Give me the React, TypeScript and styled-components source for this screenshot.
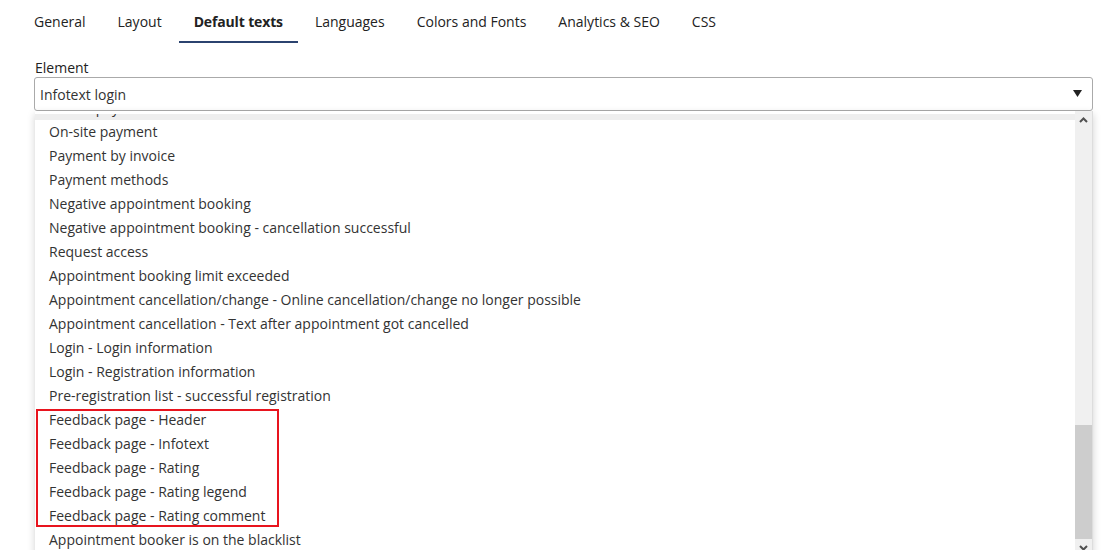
import React, { useLayoutEffect, useRef } from 'react'
import styled, { createGlobalStyle } from 'styled-components'

const GlobalStyle = createGlobalStyle`
  html, body {
    margin: 0;
    padding: 0;
    background: #fff;
    overflow: hidden;
  }
  body {
    font-family: 'Open Sans', 'Liberation Sans', sans-serif;
    font-size: 14px;
    color: #333;
  }
`

const Page = styled.div`
  padding: 0 11px 0 34px;
`

const TabBar = styled.nav`
  display: flex;
  gap: 2px;
  margin-left: -15px;
`

const Tab = styled.div<{ $active?: boolean }>`
  padding: 12px 15px 9px;
  line-height: 20px;
  font-size: 14px;
  color: #222;
  font-weight: ${(p) => (p.$active ? 700 : 400)};
  letter-spacing: ${(p) => (p.$active ? '-0.15px' : '0')};
  border-bottom: 2px solid ${(p) => (p.$active ? '#2b436f' : 'transparent')};
  cursor: pointer;
`

const Field = styled.div`
  margin-top: 16px;
`

const Label = styled.label`
  display: block;
  padding-left: 1px;
  line-height: 18px;
  color: #222;
`

const SelectBox = styled.div`
  display: flex;
  align-items: center;
  justify-content: space-between;
  height: 32px;
  border: 1px solid #aaa;
  border-radius: 3px;
  padding: 0 10px 0 5px;
  color: #333;
`

const Caret = () => (
  <svg width="9" height="8" viewBox="0 0 9 8">
    <path d="M0 0h9L4.5 7z" fill="#222" />
  </svg>
)

const Dropdown = styled.div`
  display: flex;
  height: 442px;
  padding-top: 3px;
  margin-left: 1px;
  background: #fff;
  border-right: 1px solid #ddd;
  box-shadow: 0 3px 8px rgba(0, 0, 0, 0.18);
`

const Options = styled.ul`
  flex: 1;
  list-style: none;
  margin: 0;
  padding: 0;
  overflow: hidden;
`

const Option = styled.li<{ $hover?: boolean }>`
  height: 24px;
  line-height: 24px;
  padding-left: 14px;
  white-space: nowrap;
  color: #333;
  background: ${(p) => (p.$hover ? '#eee' : 'transparent')};
`

// red marker drawn round a group of options
const Marked = styled.div`
  position: relative;

  &::after {
    content: '';
    position: absolute;
    left: 1px;
    top: 1px;
    width: 239px;
    height: 114px;
    border: 2px solid #e8141e;
    pointer-events: none;
  }
`

const Scrollbar = styled.div`
  width: 17px;
  margin-top: -3px;
  display: flex;
  flex-direction: column;
  background: #f0f0f0;
`

const ScrollButton = styled.div`
  height: 17px;
  flex-shrink: 0;
  display: flex;
  align-items: center;
  justify-content: center;
`

const Track = styled.div`
  flex: 1;
  display: flex;
  flex-direction: column;
  justify-content: flex-end;
`

const Thumb = styled.div`
  height: 114px;
  background: #cdcdcd;
`

const Chevron = ({ up }: { up?: boolean }) => (
  <svg width="9" height="6" viewBox="0 0 9 6">
    <path
      d={up ? 'M1 5l3.5-3.5L8 5' : 'M1 1l3.5 3.5L8 1'}
      fill="none"
      stroke="#505050"
      strokeWidth="2"
    />
  </svg>
)

const tabs = ['General', 'Layout', 'Default texts', 'Languages', 'Colors and Fonts', 'Analytics & SEO', 'CSS']

const before = [
  'On-site payment',
  'Payment by invoice',
  'Payment methods',
  'Negative appointment booking',
  'Negative appointment booking - cancellation successful',
  'Request access',
  'Appointment booking limit exceeded',
  'Appointment cancellation/change - Online cancellation/change no longer possible',
  'Appointment cancellation - Text after appointment got cancelled',
  'Login - Login information',
  'Login - Registration information',
  'Pre-registration list - successful registration',
]

const feedback = [
  'Feedback page - Header',
  'Feedback page - Infotext',
  'Feedback page - Rating',
  'Feedback page - Rating legend',
  'Feedback page - Rating comment',
]

const after = ['Appointment booker is on the blacklist', 'Appointment booker is not allowed', 'Booking confirmation']

export default function App() {
  const listRef = useRef<HTMLUListElement>(null)

  // the option list is opened scrolled down to its lower part
  useLayoutEffect(() => {
    if (listRef.current) listRef.current.scrollTop = 18
  }, [])

  return (
    <Page>
      <GlobalStyle />
      <TabBar>
        {tabs.map((t) => (
          <Tab key={t} $active={t === 'Default texts'}>
            {t}
          </Tab>
        ))}
      </TabBar>
      <Field>
        <Label>Element</Label>
        <SelectBox>
          <span>Infotext login</span>
          <Caret />
        </SelectBox>
        <Dropdown>
          <Options ref={listRef}>
            <Option $hover>Online payment</Option>
            {before.map((o) => (
              <Option key={o}>{o}</Option>
            ))}
            <Marked>
              {feedback.map((o) => (
                <Option key={o}>{o}</Option>
              ))}
            </Marked>
            {after.map((o) => (
              <Option key={o}>{o}</Option>
            ))}
          </Options>
          <Scrollbar>
            <ScrollButton>
              <Chevron up />
            </ScrollButton>
            <Track>
              <Thumb />
            </Track>
            <ScrollButton>
              <Chevron />
            </ScrollButton>
          </Scrollbar>
        </Dropdown>
      </Field>
    </Page>
  )
}
